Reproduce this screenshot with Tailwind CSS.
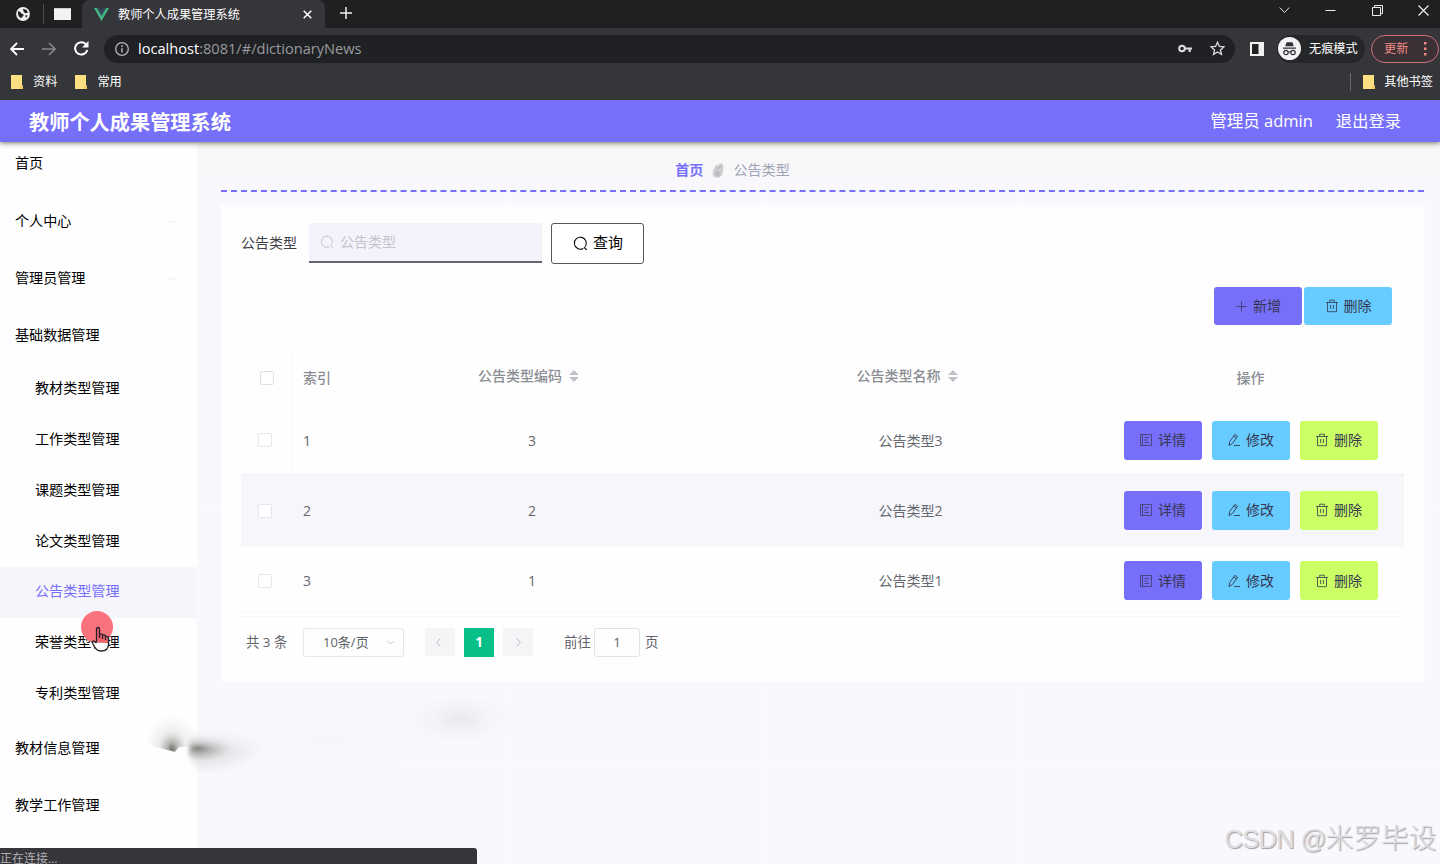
<!DOCTYPE html>
<html lang="zh-CN">
<head>
    <meta charset="UTF-8">
    <meta name="viewport" content="width=device-width, initial-scale=1.0">
    <title>教师个人成果管理系统</title>
    <script src="https://cdn.jsdelivr.net/npm/@tailwindcss/browser@4"></script>
</head>
<body class="relative w-[1440px] h-[864px] overflow-hidden flex flex-col bg-[#f8f8fd] text-sm font-['Open_Sans','Noto_Sans_CJK_SC',sans-serif]">
    <!-- icons -->
    <svg class="hidden">
        <symbol id="search" viewBox="0 0 14 14"><path d="M9.6 11.6A5.6 5.6 0 1 1 11.4 10M10.3 10.5 12.8 13" fill="none" stroke="currentColor"/></symbol>
        <symbol id="trash" viewBox="0 0 14 14"><path d="M1 3.5h12M2.5 3.5v9.2h9V3.5M4.7 3.3V1.2h4.6v2.1M5.6 6v4M8.4 6v4" fill="none" stroke="currentColor" stroke-width=".8"/></symbol>
        <symbol id="doc" viewBox="0 0 14 14"><path d="M1.5 1.5h11v11h-11zM3.5 1.5v11M5.5 4.5h4.5M5.5 7h3M5.5 9.5h4.5" fill="none" stroke="currentColor" stroke-width=".7"/></symbol>
        <symbol id="edit" viewBox="0 0 14 14"><path d="M2 12.5l.6-3.8L8 1.3l2.6 1.9-5.2 7.3zM6.8 3l2.6 1.9M7 12.5h6" fill="none" stroke="currentColor" stroke-width=".9"/></symbol>
        <symbol id="folder" viewBox="0 0 12 14"><path d="M0 0h11v10l1 1v3H0z" fill="#fbe081"/><path d="M9 11h3v3H9z" fill="#f0cd62"/></symbol>
    </svg>

    <!-- tab strip -->
    <div class="h-[28px] flex bg-[#1e2021] text-white">
        <div class="w-[82px] flex items-center">
            <svg class="w-[14px] h-[14px] ml-4" viewBox="0 0 14 14"><circle cx="7" cy="7" r="6.9" fill="#f1f1f1"/><path d="M2 4.2C4 4.5 5 5 5.2 6.6c1.8.2 2.7.8 2.3 2L5.4 11C3 10.6 1.6 8 2 4.2zM7 1.7l3.4 1 1.6 3-2.8.6L7.5 4.6zM9 8.6l2.6-.3-1.3 2.6z" fill="#222"/></svg>
            <span class="w-px h-5 ml-[13px] bg-[#4a4c4e]"></span>
            <span class="w-[17px] h-3 ml-[10px] bg-[#f2f2f2] border-t border-[#ccc]"></span>
        </div>
        <div class="w-[243px] flex items-center rounded-t-lg bg-[#35363a]">
            <svg class="w-[15px] h-[13px] ml-3" viewBox="0 0 15 13"><path d="M0 0h3l4.5 7.8L12 0h3L7.5 13z" fill="#41b883"/><path d="M3 0h2.8l1.7 3 1.7-3H12L7.5 7.8z" fill="#35495e"/></svg>
            <span class="ml-[9px] pt-px text-[12.2px] whitespace-nowrap">教师个人成果管理系统</span>
            <svg class="w-[9px] h-[9px] ml-auto mr-[13px]" viewBox="0 0 9 9"><path d="M.7.7l7.6 7.6M8.3.7L.7 8.3" stroke="#fff" stroke-width="1.5"/></svg>
        </div>
        <svg class="w-3 h-3 ml-[15px] mt-[7px]" viewBox="0 0 12 12"><path d="M6 0v12M0 6h12" stroke="#eee" stroke-width="1.5"/></svg>
        <div class="ml-auto flex pt-[5px] pr-[11px]">
            <svg class="w-[11px] h-[11px] mr-[35px]" viewBox="0 0 11 11"><path d="M.7 2.5l4.8 5 4.8-5" fill="none" stroke="#ddd"/></svg>
            <svg class="w-[11px] h-[11px] mr-[36px]" viewBox="0 0 11 11"><path d="M.5 5.5h10" stroke="#eee"/></svg>
            <svg class="w-[11px] h-[11px] mr-[35px]" viewBox="0 0 11 11"><path d="M.5 2.5h8v8h-8zM2.5 2.5v-2h8v8h-2" fill="none" stroke="#eee"/></svg>
            <svg class="w-[11px] h-[11px]" viewBox="0 0 11 11"><path d="M.5.5l10 10M10.5.5l-10 10" stroke="#eee" stroke-width="1.2"/></svg>
        </div>
    </div>

    <!-- address bar -->
    <div class="h-[41px] flex items-center bg-[#35363a] text-white">
        <svg class="w-[14px] h-[14px] ml-[10px]" viewBox="0 0 14 14"><path d="M14 7H1.2M7 1L1 7l6 6" fill="none" stroke="#fff" stroke-width="1.8"/></svg>
        <svg class="w-[14px] h-[14px] ml-[18px]" viewBox="0 0 14 14"><path d="M0 7h12.8M7 1l6 6-6 6" fill="none" stroke="#85878a" stroke-width="1.6"/></svg>
        <svg class="w-[15px] h-[15px] ml-[18px]" viewBox="0 0 15 15"><path d="M13.3 9A6.2 6.2 0 1 1 12 3.3" fill="none" stroke="#fff" stroke-width="2"/><path d="M14.5 0v6.5H8z" fill="#fff"/></svg>
        <div class="w-[1131px] h-7 ml-[15px] pl-[11px] pr-[10px] flex items-center rounded-full bg-[#202124]">
            <svg class="w-[14px] h-[14px]" viewBox="0 0 14 14"><circle cx="7" cy="7" r="6.3" fill="none" stroke="#b5b7ba" stroke-width="1.3"/><path d="M7 6.2v4.3M7 3.3v1.6" stroke="#b5b7ba" stroke-width="1.5"/></svg>
            <span class="ml-[9px] text-[14.6px] text-[#999b9e]"><span class="text-white">localhost</span>:8081/#/dictionaryNews</span>
            <svg class="w-[14px] h-[9px] ml-auto" viewBox="0 0 14 9"><circle cx="4" cy="4.5" r="2.8" fill="none" stroke="#ddd" stroke-width="2"/><path d="M6.5 4.5H14M11.7 4.5v3.5" stroke="#ddd" stroke-width="2.2"/></svg>
            <svg class="w-[15px] h-[15px] ml-[18px]" viewBox="0 0 15 15"><path d="M7.5 1.2l1.9 4.2 4.5.5-3.4 3 1 4.5-4-2.4-4 2.4 1-4.5-3.4-3 4.5-.5z" fill="none" stroke="#ddd" stroke-width="1.3"/></svg>
        </div>
        <svg class="w-[14px] h-[14px] ml-[15px]" viewBox="0 0 14 14"><path d="M1 1h12v12H1z" fill="#222" stroke="#f1f1f1" stroke-width="2"/><path d="M8.5 0H14v14H8.5z" fill="#f1f1f1"/></svg>
        <div class="w-[88px] h-7 ml-[13px] flex items-center rounded-full bg-[#252628] text-[12.2px]">
            <svg class="w-[23px] h-[23px] ml-px" viewBox="0 0 23 23"><circle cx="11.5" cy="11.5" r="11.5" fill="#f1f3f4"/><path d="M5 10.5h13v1.3H5zM7.2 9.3L8.6 5.2h5.8l1.4 4.1z" fill="#303134"/><circle cx="8" cy="15.5" r="2.2" fill="none" stroke="#303134" stroke-width="1.2"/><circle cx="15" cy="15.5" r="2.2" fill="none" stroke="#303134" stroke-width="1.2"/><path d="M10 15h3" stroke="#303134"/></svg>
            <span class="ml-[8px] pt-px whitespace-nowrap">无痕模式</span>
        </div>
        <div class="w-[68px] h-7 ml-[6px] pl-[12px] flex shrink-0 items-center rounded-full border border-[#d07078] bg-[#3b3135] text-[12.2px] text-[#ee8b86]">
            更新
            <svg class="w-1 h-[14px] ml-[15px]" viewBox="0 0 4 14"><path d="M1 0h2.5v2.5H1zM1 5.5h2.5V8H1zM1 11h2.5v2.5H1z" fill="#ee8b86"/></svg>
        </div>
    </div>

    <!-- bookmarks -->
    <div class="h-[31px] pb-[5px] flex items-center bg-[#35363a] text-[12.2px] text-white">
        <svg class="w-3 h-[14px] ml-[11px]"><use href="#folder"/></svg>
        <span class="ml-[10px]">资料</span>
        <svg class="w-3 h-[14px] ml-[18px]"><use href="#folder"/></svg>
        <span class="ml-[10px]">常用</span>
        <span class="w-px h-[18px] ml-auto bg-[#66686b]"></span>
        <svg class="w-3 h-[14px] ml-3"><use href="#folder"/></svg>
        <span class="ml-[9px] mr-[7px]">其他书签</span>
    </div>

    <!-- system header -->
    <header class="relative z-10 h-[42px] pl-[29px] pr-[39px] flex shrink-0 items-center bg-[#766ffa] text-white shadow-[0_1px_5px_rgba(60,60,30,0.7)]">
        <h1 class="pt-[2px] text-[20.2px] font-bold">教师个人成果管理系统</h1>
        <span class="ml-auto text-[16.5px]">管理员 admin</span>
        <a class="ml-[23px] pt-px text-[16.3px]">退出登录</a>
    </header>

    <div class="flex-1 flex min-h-0">
        <nav class="w-[197px] flex flex-col shrink-0 bg-[#fefefe] text-[14.1px] text-black shadow-[0_0_5px_rgba(80,80,60,0.1)]">
            <a class="h-[50px] pl-[15px] pb-[8px] flex items-center shrink-0">首页</a>
            <a class="h-[57px] pl-[15px] pr-5 pt-[2px] flex items-center justify-between shrink-0">个人中心<span class="w-2 h-[2px] bg-[#f6f6fa]"></span></a>
            <a class="h-[57px] pl-[15px] pr-5 pt-[2px] flex items-center justify-between shrink-0">管理员管理<span class="w-2 h-[2px] bg-[#f6f6fa]"></span></a>
            <a class="h-[57px] pl-[15px] pt-[2px] flex items-center shrink-0">基础数据管理</a>
            <a class="h-[51px] pl-[35px] pb-px flex items-center shrink-0">教材类型管理</a>
            <a class="h-[51px] pl-[35px] pb-px flex items-center shrink-0">工作类型管理</a>
            <a class="h-[51px] pl-[35px] pb-px flex items-center shrink-0">课题类型管理</a>
            <a class="h-[51px] pl-[35px] pb-px flex items-center shrink-0">论文类型管理</a>
            <a class="h-[51px] pl-[35px] pb-[2px] flex items-center shrink-0 bg-[#f6f5fb] text-[#766ffa]">公告类型管理</a>
            <a class="h-[51px] pl-[35px] pb-[3px] flex items-center shrink-0">荣誉类型管理</a>
            <a class="h-[51px] pl-[35px] pb-[3px] flex items-center shrink-0">专利类型管理</a>
            <a class="h-[57px] pl-[15px] flex items-center shrink-0">教材信息管理</a>
            <a class="h-[57px] pl-[15px] flex items-center shrink-0">教学工作管理</a>
        </nav>

        <main class="flex-1 pl-6 pr-[17px] bg-linear-to-b from-[#f7f7f6] to-[#f8f8fd] to-[50px]">
            <div class="h-[50px] pt-[9px] pr-[180px] flex items-center justify-center gap-[9px] border-b-2 border-dashed border-[#766ffa] text-[14.1px] text-[#a0a3b5]">
                <span class="font-bold text-[#766ffa]">首页</span>
                <svg class="w-3 h-[15px]" viewBox="0 0 12 15"><path d="M4.5 1.5l2 1 1-2h3l1 3-1 8-3 3h-5l-2-3 1-5z" fill="#cdcdd0"/><path d="M5 6l4-3M4 9h3v3H4z" fill="none" stroke="#adadb2"/></svg>
                <span>公告类型</span>
            </div>

            <section class="mt-[13px] h-[476px] pt-[18px] px-5 bg-[#fefefe] shadow-[0_0_4px_#fcfcfe]">
                <div class="h-10 flex items-center">
                    <label class="w-[68px] text-[#404148]">公告类型</label>
                    <div class="w-[233px] h-10 pl-[11px] flex items-center gap-[6px] border-b-2 border-[#66646a] bg-[#f4f2fa] text-[#c3c4d0]">
                        <svg class="w-[14px] h-[14px]"><use href="#search"/></svg>
                        公告类型
                    </div>
                    <button class="w-[93px] h-[41px] ml-[9px] pl-px flex items-center justify-center gap-[5px] rounded-[3px] border border-[#55555a] bg-white text-[15px] text-black">
                        <svg class="w-[15px] h-[15px]"><use href="#search"/></svg>
                        查询
                    </button>
                </div>

                <div class="mt-6 pr-3 flex justify-end gap-[2px] text-[#35364f]">
                    <button class="w-[88px] h-[38px] flex items-center justify-center gap-[5px] rounded-[3px] bg-[#766ffa]">
                        <svg class="w-[13px] h-[13px]" viewBox="0 0 14 14"><path d="M7 1.5v11M1.5 7h11" stroke="currentColor" stroke-width=".8"/></svg>新增
                    </button>
                    <button class="w-[88px] h-[38px] flex items-center justify-center gap-[5px] rounded-[3px] bg-[#66ccff]">
                        <svg class="w-[14px] h-[14px]"><use href="#trash"/></svg>删除
                    </button>
                </div>

                <!-- table -->
                <div class="mt-[25px] w-[1163px] text-[#66676e]">
                    <div class="h-[56px] grid grid-cols-[51px_48px_384px_373px_307px] items-center text-[#8b8d94] font-medium">
                        <span class="w-[14px] h-[14px] ml-[19px] rounded-[2px] border border-[#dfdfea] bg-white"></span>
                        <span class="h-full pl-[10px] flex items-center border-l border-[#f8f8fc]">索引</span>
                        <span class="flex items-center justify-center gap-[7px] pb-1 pr-[7px]">公告类型编码<svg class="w-[10px] h-3" viewBox="0 0 10 12"><path d="M0 5l5-5 5 5zM0 7h10l-5 5z" fill="#bfc1c8"/></svg></span>
                        <span class="flex items-center justify-center gap-[7px] pb-1 pr-[7px]">公告类型名称<svg class="w-[10px] h-3" viewBox="0 0 10 12"><path d="M0 5l5-5 5 5zM0 7h10l-5 5z" fill="#bfc1c8"/></svg></span>
                        <span class="text-center">操作</span>
                    </div>
                    <div class="h-[68px] grid grid-cols-[51px_48px_384px_373px_307px] items-center">
                        <span class="w-[14px] h-[14px] ml-[17px] rounded-[2px] border border-[#e6e6f0] bg-white"></span>
                        <span class="h-full pl-[10px] pt-px flex items-center border-l border-[#f8f8fc]">1</span>
                        <span class="pt-px text-center">3</span>
                        <span class="pt-px text-center">公告类型3</span>
                        <span class="flex justify-center gap-[10px] text-[#35364f]">
                            <button class="w-[78px] h-[39px] flex items-center justify-center gap-[5px] rounded-[3px] bg-[#766ffa]"><svg class="w-[14px] h-[14px]"><use href="#doc"/></svg>详情</button>
                            <button class="w-[78px] h-[39px] flex items-center justify-center gap-[5px] rounded-[3px] bg-[#66ccff]"><svg class="w-[14px] h-[14px]"><use href="#edit"/></svg>修改</button>
                            <button class="w-[78px] h-[39px] flex items-center justify-center gap-[5px] rounded-[3px] bg-[#ccff66]"><svg class="w-[14px] h-[14px]"><use href="#trash"/></svg>删除</button>
                        </span>
                    </div>
                    <div class="h-[73px] grid grid-cols-[51px_48px_384px_373px_307px] items-center border-t border-[#eeeef4] bg-[#f6f6fb]">
                        <span class="w-[14px] h-[14px] ml-[17px] rounded-[2px] border border-[#e6e6f0] bg-white"></span>
                        <span class="pl-[11px]">2</span>
                        <span class="text-center">2</span>
                        <span class="text-center">公告类型2</span>
                        <span class="pb-[2px] flex justify-center gap-[10px] text-[#35364f]">
                            <button class="w-[78px] h-[39px] flex items-center justify-center gap-[5px] rounded-[3px] bg-[#766ffa]"><svg class="w-[14px] h-[14px]"><use href="#doc"/></svg>详情</button>
                            <button class="w-[78px] h-[39px] flex items-center justify-center gap-[5px] rounded-[3px] bg-[#66ccff]"><svg class="w-[14px] h-[14px]"><use href="#edit"/></svg>修改</button>
                            <button class="w-[78px] h-[39px] flex items-center justify-center gap-[5px] rounded-[3px] bg-[#ccff66]"><svg class="w-[14px] h-[14px]"><use href="#trash"/></svg>删除</button>
                        </span>
                    </div>
                    <div class="h-[64px] pt-[3px] grid grid-cols-[51px_48px_384px_373px_307px] items-center">
                        <span class="w-[14px] h-[14px] ml-[17px] rounded-[2px] border border-[#e6e6f0] bg-white"></span>
                        <span class="pl-[11px]">3</span>
                        <span class="text-center">1</span>
                        <span class="text-center">公告类型1</span>
                        <span class="flex justify-center gap-[10px] text-[#35364f]">
                            <button class="w-[78px] h-[39px] flex items-center justify-center gap-[5px] rounded-[3px] bg-[#766ffa]"><svg class="w-[14px] h-[14px]"><use href="#doc"/></svg>详情</button>
                            <button class="w-[78px] h-[39px] flex items-center justify-center gap-[5px] rounded-[3px] bg-[#66ccff]"><svg class="w-[14px] h-[14px]"><use href="#edit"/></svg>修改</button>
                            <button class="w-[78px] h-[39px] flex items-center justify-center gap-[5px] rounded-[3px] bg-[#ccff66]"><svg class="w-[14px] h-[14px]"><use href="#trash"/></svg>删除</button>
                        </span>
                    </div>
                    <div class="h-[6px] border-y border-[#f6f6fc]"></div>
                </div>

                <!-- pagination -->
                <div class="mt-[10px] h-[30px] pl-[5px] flex items-center text-[13.4px] text-[#606168]">
                    <span class="w-[57px] pt-[2px] whitespace-nowrap">共 3 条</span>
                    <div class="w-[101px] h-[29px] pl-[19px] pr-[9px] flex items-center justify-between rounded-[3px] border border-[#e6e6ee] text-[13px]">
                        10条/页
                        <svg class="w-[7px] h-[5px]" viewBox="0 0 7 5"><path d="M.5 1l3 3 3-3" fill="none" stroke="#c0c2ca"/></svg>
                    </div>
                    <div class="w-[30px] h-7 ml-[21px] pr-1 flex items-center justify-center bg-[#f5f5f8]"><svg class="w-[5px] h-[9px]" viewBox="0 0 5 9"><path d="M4.5.5l-4 4 4 4" fill="none" stroke="#b9bac2"/></svg></div>
                    <div class="w-[30px] h-[29px] ml-[9px] pt-[2px] flex items-center justify-center bg-[#09bf88] font-bold text-white">1</div>
                    <div class="w-[30px] h-7 ml-[9px] flex items-center justify-center bg-[#f5f5f8]"><svg class="w-[5px] h-[9px]" viewBox="0 0 5 9"><path d="M.5.5l4 4-4 4" fill="none" stroke="#b9bac2"/></svg></div>
                    <span class="w-[30px] ml-[31px] pt-[2px]">前往</span>
                    <div class="w-[46px] h-[29px] pt-[2px] flex items-center justify-center rounded-[3px] border border-[#e2e2ea]">1</div>
                    <span class="ml-[5px] pt-[2px]">页</span>
                </div>
            </section>
        </main>
    </div>

    <!-- ink smudges -->
    <svg class="absolute left-[130px] top-[680px] w-[400px] h-[110px] pointer-events-none" viewBox="0 0 400 110">
        <defs>
            <radialGradient id="ink"><stop offset="0" stop-color="#45453f" stop-opacity=".75"/><stop offset=".2" stop-color="#55554f" stop-opacity=".42"/><stop offset=".5" stop-color="#77776f" stop-opacity=".13"/><stop offset="1" stop-color="#888" stop-opacity="0"/></radialGradient>
            <radialGradient id="haze"><stop offset="0" stop-color="#888" stop-opacity=".14"/><stop offset=".5" stop-color="#888" stop-opacity=".05"/><stop offset="1" stop-color="#888" stop-opacity="0"/></radialGradient>
            <linearGradient id="fade" x2="0" y2="1"><stop offset="0" stop-color="#000"/><stop offset=".35" stop-color="#fff"/></linearGradient>
            <filter id="soft"><feGaussianBlur stdDeviation="2"/></filter>
            <mask id="lower"><path d="M61 50h110v60H75L59 76v-6z" fill="url(#fade)" filter="url(#soft)"/></mask>
            <clipPath id="upper"><path d="M0 0h90v67l-36 0-5 0-4 5-19-5-26-8z"/></clipPath>
        </defs>
        <ellipse cx="42" cy="69" rx="27" ry="34" fill="url(#ink)" clip-path="url(#upper)"/>
        <ellipse cx="68" cy="68" rx="66" ry="27" fill="url(#ink)" mask="url(#lower)"/>
        <ellipse cx="330" cy="39" rx="50" ry="24" fill="url(#haze)"/>
        <ellipse cx="200" cy="58" rx="160" ry="30" fill="url(#haze)" opacity=".15"/>
    </svg>

    <!-- pointer -->
    <span class="absolute z-20 left-[81px] top-[611px] w-8 h-8 rounded-full bg-[#f8737c]"></span>
    <svg class="absolute z-20 left-[91px] top-[626px] w-[19px] h-[27px]" viewBox="0 0 19 27">
        <path d="M5.5 15V3q0-1.5 1.5-1.5T8.5 3v5q3-.5 3 1 3-.5 3 1.5 3-.5 3 1.5v6q0 7-7.5 7-5 0-8-7l-1-2q1.5-2 4.5 1z" fill="#fff"/>
        <path d="M5.5 15V3q0-1.5 1.5-1.5T8.5 3v5q3-.5 3 1 3-.5 3 1.5 3-.5 3 1.5v5l-15-.5-.5-1q1.5-1 3.500.5z" fill="#ed626c"/>
        <path d="M5.5 16V3q0-1.5 1.5-1.5T8.5 3v9V8q3-.5 3 1v4-4q3-.5 3 1.5V14v-3.5q3-.5 3 1.5v6q0 7-7.5 7-5 0-8-7l-1-2q1.5-2 4.5 1" fill="none" stroke="#242027" stroke-width="1.3"/>
    </svg>

    <!-- loading status -->
    <div class="absolute z-20 left-0 bottom-0 w-[477px] h-4 overflow-hidden rounded-tr-[3px] bg-[#36353a] text-[12px] leading-[21px] text-[#aeb0b4]">正在连接...</div>

    <div class="absolute right-[4px] top-[820px] text-[28px] leading-[38px] font-light tracking-[-0.2px] whitespace-nowrap text-[#dedee2] font-['Liberation_Sans','Noto_Sans_CJK_SC',sans-serif] [text-shadow:1px_1px_1px_#a0a0a5]"><span class="text-[25.5px] tracking-[-0.7px]">CSDN @</span><span class="text-[27.8px]">米罗毕设</span></div>
</body>
</html>
